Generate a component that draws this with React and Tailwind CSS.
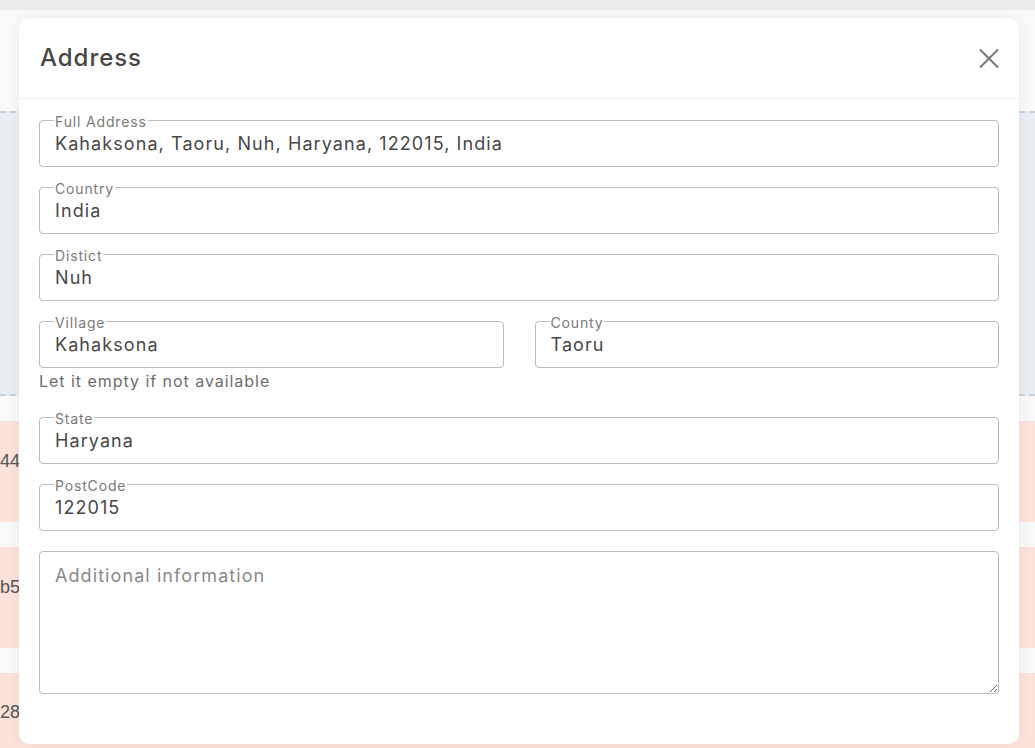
import React from "react";

const font = { fontFamily: "Inter, 'Noto Sans', sans-serif" };

const Field = ({ label, value, className = "" }) => (
  <fieldset className={`border border-[#bdbdbd] rounded-[4px] px-[15px] pb-[9px] ${className}`}>
    <legend className="px-[1px] -ml-[1px] text-[14px] leading-[14px] tracking-[0.06em] text-[#7a7a7a]">
      <span className="relative top-[2px]">{label}</span>
    </legend>
    <input
      readOnly
      value={value}
      className="mt-[4px] w-full bg-transparent outline-none text-[18px] leading-[26px] h-[26px] tracking-[0.06em] text-[#484848]"
    />
  </fieldset>
);

const AddressModal = () => {
  return (
    <div className="w-[1000px] h-[726px] bg-white rounded-[10px] shadow-[0_0_16px_rgba(0,0,0,0.06)] flex flex-col">
      {/* header */}
      <div className="h-[81px] shrink-0 border-b border-[#f0f0f0] flex items-center justify-between pl-[21px] pr-5">
        <h2 className="text-[24px] font-medium text-[#474747] tracking-[0.04em]">Address</h2>
        <button className="w-[20px] h-[21px] flex items-center justify-center text-[#777]">
          <svg width="20" height="21" viewBox="0 0 20 21" fill="none" stroke="currentColor" strokeWidth="2">
            <path d="M1 1.5 L19 19.5 M19 1.5 L1 19.5" />
          </svg>
        </button>
      </div>

      {/* body */}
      <div className="flex flex-col px-5 pt-[14px]">
        <Field label="Full Address" value="Kahaksona, Taoru, Nuh, Haryana, 122015, India" />
        <Field label="Country" value="India" className="mt-[13px]" />
        <Field label="Distict" value="Nuh" className="mt-[13px]" />
        <div className="grid grid-cols-2 gap-[31px] mt-[13px]">
          <Field label="Village" value="Kahaksona" />
          <Field label="County" value="Taoru" />
        </div>
        <p className="mt-[2px] text-[16px] leading-[22px] tracking-[0.06em] text-[#6e6e6e]">Let it empty if not available</p>
        <Field label="State" value="Haryana" className="mt-[18px]" />
        <Field label="PostCode" value="122015" className="mt-[13px]" />
        <textarea
          placeholder="Additional information"
          className="mt-[20px] h-[143px] border border-[#bdbdbd] rounded-[4px] px-[15px] py-[11px] text-[18px] leading-[26px] tracking-[0.06em] text-[#484848] placeholder:text-[#8a8a8a] outline-none"
        />
      </div>
    </div>
  );
};

const App = () => {
  return (
    <div className="relative w-full h-screen overflow-hidden bg-[#f9f9f9]" style={font}>
      {/* page behind */}
      <div className="h-[10px] bg-[#ececec]" />
      <div className="h-[101px]" />
      <div className="h-[285px] bg-[#e9eef3] border-y-2 border-dashed border-[#c8d2dd]" />
      <div
        className="flex flex-col gap-[25px] mt-[25px] text-[18px] text-[#555]"
        style={{ fontFamily: "'Liberation Sans', Arial, sans-serif" }}
      >
        <div className="h-[101px] bg-[#fbe3dc] pt-[30px] leading-[20px]">4410</div>
        <div className="h-[101px] bg-[#fbe3dc] pt-[30px] leading-[20px]">b52f</div>
        <div className="h-[101px] bg-[#fbe3dc] pt-[29px] leading-[20px]">288e</div>
      </div>

      {/* modal */}
      <div className="absolute inset-0 flex justify-start pl-[19px] pt-[18px]">
        <AddressModal />
      </div>
    </div>
  );
};

export default App;
